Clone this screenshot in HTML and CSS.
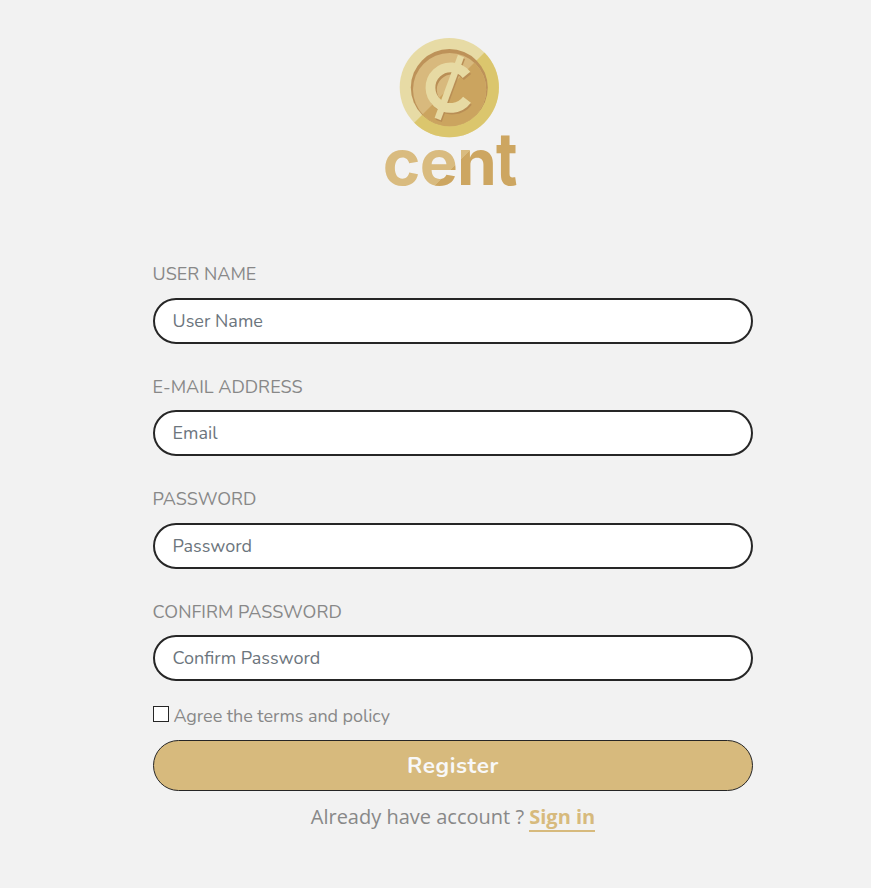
FILE: index.html
```html
<!DOCTYPE html>
<html lang="en">
<head>
<meta charset="utf-8">
<title>Register</title>
<link rel="stylesheet" href="styles.css">
</head>
<body>
<main class="page">
  <svg class="logo" viewBox="0 0 140 165" role="img" aria-label="cent">
    <defs>
      <linearGradient id="word" gradientUnits="userSpaceOnUse" x1="50" y1="116" x2="94" y2="160">
        <stop offset="0" stop-color="#d9bb7f"/><stop offset=".5" stop-color="#d9bb7f"/>
        <stop offset=".5" stop-color="#cda661"/><stop offset="1" stop-color="#cda661"/>
      </linearGradient>
      <clipPath id="lower"><path d="M34.5 92.5 104.5 22.5H140V110H34.5Z"/></clipPath>
    </defs>
    <circle cx="69.3" cy="57.6" r="49.6" fill="#e7dba5"/>
    <circle cx="69.3" cy="57.6" r="49.6" fill="#dbc66d" clip-path="url(#lower)"/>
    <circle cx="69.3" cy="57.6" r="38.5" fill="#bd9259"/>
    <circle cx="69.6" cy="59.6" r="36.6" fill="#d8b97d"/>
    <circle cx="69.6" cy="59.6" r="36.6" fill="#cba45f" clip-path="url(#lower)"/>
    <g fill="none" stroke="#b98e55" stroke-width="9.5" transform="translate(1 1.8)">
      <path d="M86.5 45.2A20 20 0 1 0 87 70"/><path stroke-width="6.5" d="M81 26 57.7 89"/>
    </g>
    <g fill="none" stroke="#e7daa3">
      <path stroke-width="9.8" d="M86.5 44.8A20.3 20.3 0 1 0 87 69.8"/><path stroke-width="6.5" d="M81 26 57.7 89"/>
    </g>
    <text class="wordmark" x="2.7" y="155" fill="url(#word)">cen</text>
    <text class="wordmark tall" transform="translate(116 155) scale(.8 1)" fill="#cda661">t</text>
  </svg>
  <form class="form">
    <div class="field"><label class="label" for="user">USER NAME</label><input class="input" id="user" type="text" placeholder="User Name"></div>
    <div class="field"><label class="label" for="email">E-MAIL ADDRESS</label><input class="input" id="email" type="email" placeholder="Email"></div>
    <div class="field"><label class="label" for="pass">PASSWORD</label><input class="input" id="pass" type="password" placeholder="Password"></div>
    <div class="field"><label class="label" for="confirm">CONFIRM PASSWORD</label><input class="input" id="confirm" type="password" placeholder="Confirm Password"></div>
    <label class="terms"><input class="check" type="checkbox"><span>Agree the terms and policy</span></label>
    <button class="register" type="button">Register</button>
    <p class="signin">Already have account ? <a class="link" href="#">Sign in</a></p>
  </form>
</main>
</body>
</html>
```
FILE: styles.css
```css
* { box-sizing: border-box; }
body { margin: 0; background: #f2f2f2; color: #888; font: 18px/27px Nunito, Lato, sans-serif; }
.page { display: flex; flex-direction: column; min-height: 888px; padding: 30px 118px 0 153px; }
.logo { display: block; overflow: visible; width: 140px; height: 165px; margin-left: 227px; }
.wordmark { font: 700 64px Inter, sans-serif; letter-spacing: -.7px; }
.tall { font-size: 73px; letter-spacing: 0; }
.form { display: flex; flex-direction: column; width: 600px; margin-top: 64.9px; }
.field { display: flex; flex-direction: column; height: 112.5px; }
.label { height: 38px; padding-top: 1.5px; line-height: 27px; margin-left: -.4px; white-space: nowrap; }
.input { width: 600px; height: 46px; padding: 0 17.6px; border: 2px solid #262626; border-radius: 23px; background: #fff; font: inherit; }
.input::placeholder { color: #6c757d; opacity: 1; }
.terms { display: flex; align-items: center; height: 27px; margin-top: -7px; white-space: nowrap; letter-spacing: -.06px; }
.check { appearance: none; width: 16px; height: 16px; margin: -5px 4.4px 0 0; border: 1px solid #262626; background: #fff; }
.register { height: 51px; margin-top: 10px; padding-top: 2px; border: 1px solid #262626; border-radius: 26px; background: #d7ba7d; color: #f8f8f8; font: 700 22.5px Nunito, Lato, sans-serif; letter-spacing: .6px; }
.signin { margin: 12px 0 0; text-align: center; font: 20px/27px "Open Sans", sans-serif; white-space: nowrap; }
.link { display: inline-block; border-bottom: 2px solid #d7ba7d; color: #d7ba7d; font-weight: 700; text-decoration: none; }
```
